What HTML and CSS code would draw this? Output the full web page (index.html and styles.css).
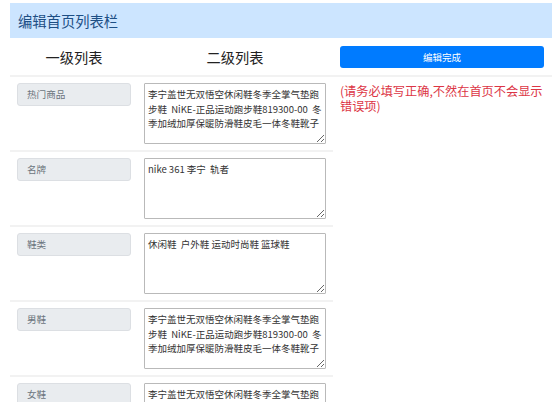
FILE: index.html
```html
<!DOCTYPE html>
<html lang="zh-CN">
<head>
<meta charset="utf-8">
<title>编辑首页列表栏</title>
<link rel="stylesheet" href="styles.css">
</head>
<body>
<div class="page">
  <div class="banner">编辑首页列表栏</div>
  <div class="head-row">
    <div class="col-label head">一级列表</div>
    <div class="col-text head">二级列表</div>
    <div class="col-side"><button class="btn" type="button">编辑完成</button></div>
  </div>
  <div class="main">
    <div class="list">
      <div class="item">
        <div class="col-label"><div class="label">热门商品</div></div>
        <div class="col-text"><textarea class="area">李宁盖世无双悟空休闲鞋冬季全掌气垫跑步鞋  NiKE-正品运动跑步鞋819300-00  冬季加绒加厚保暖防滑鞋皮毛一体冬鞋靴子</textarea></div>
      </div>
      <div class="item">
        <div class="col-label"><div class="label">名牌</div></div>
        <div class="col-text"><textarea class="area">nike 361 李宁  轨者</textarea></div>
      </div>
      <div class="item">
        <div class="col-label"><div class="label">鞋类</div></div>
        <div class="col-text"><textarea class="area">休闲鞋  户外鞋 运动时尚鞋 篮球鞋</textarea></div>
      </div>
      <div class="item">
        <div class="col-label"><div class="label">男鞋</div></div>
        <div class="col-text"><textarea class="area">李宁盖世无双悟空休闲鞋冬季全掌气垫跑步鞋  NiKE-正品运动跑步鞋819300-00  冬季加绒加厚保暖防滑鞋皮毛一体冬鞋靴子</textarea></div>
      </div>
      <div class="item">
        <div class="col-label"><div class="label">女鞋</div></div>
        <div class="col-text"><textarea class="area">李宁盖世无双悟空休闲鞋冬季全掌气垫跑步鞋  NiKE-正品运动跑步鞋819300-00  冬季加绒加厚保暖防滑鞋皮毛一体冬鞋靴子</textarea></div>
      </div>
    </div>
    <div class="note">(请务必填写正确,不然在首页不会显示错误项)</div>
  </div>
</div>
</body>
</html>
```
FILE: styles.css
```css
* { box-sizing: border-box; }
html, body { margin: 0; padding: 0; background: #fff; }
body {
  font-family: "Noto Sans CJK SC", "Noto Sans", sans-serif;
  color: #333;
  overflow: hidden;
}
.page { padding: 3px 2px 0 10px; }
.banner {
  background: #cce5ff;
  height: 35px;
  line-height: 35px;
  padding: 0 8px;
  font-size: 14.3px;
  color: #1d4f85;
}
.head-row {
  display: flex;
  align-items: center;
  height: 39px;
  border-bottom: 2px solid #f2f2f2;
}
.col-label { width: 128px; padding: 0 7px; flex: none; }
.col-text { width: 195px; padding: 0 7px 0 6px; flex: none; }
.col-side { flex: 1; padding: 0 8px 0 7px; }
.head {
  text-align: center;
  font-size: 14.2px;
  color: #222;
}
.btn {
  display: block;
  width: 100%;
  height: 22px;
  border: none;
  border-radius: 3px;
  background: #007bff;
  color: #fff;
  font-family: inherit;
  font-size: 9.5px;
  padding: 0;
}
.main { display: flex; }
.list { width: 323px; flex: none; }
.item {
  display: flex;
  padding: 6px 0;
  border-bottom: 2px solid #f2f2f2;
}
.label {
  height: 23px;
  line-height: 21px;
  background: #e9ecef;
  border: 1px solid #dcdfe3;
  border-radius: 3px;
  padding: 0 9px;
  font-size: 9.6px;
  color: #6c757d;
}
.area {
  display: block;
  width: 182px;
  height: 61px;
  margin: 0;
  padding: 3px 3px;
  border: 1px solid #b9b9b9;
  border-radius: 1px;
  font-family: "Noto Sans CJK SC", "Noto Sans", sans-serif;
  font-size: 9.5px;
  line-height: 14.5px;
  color: #333;
  background: #fff;
  overflow: hidden;
}
.note {
  flex: 1;
  padding: 7px 6px 0 7px;
  font-size: 12.2px;
  line-height: 14.5px;
  color: #dc3545;
}
```
